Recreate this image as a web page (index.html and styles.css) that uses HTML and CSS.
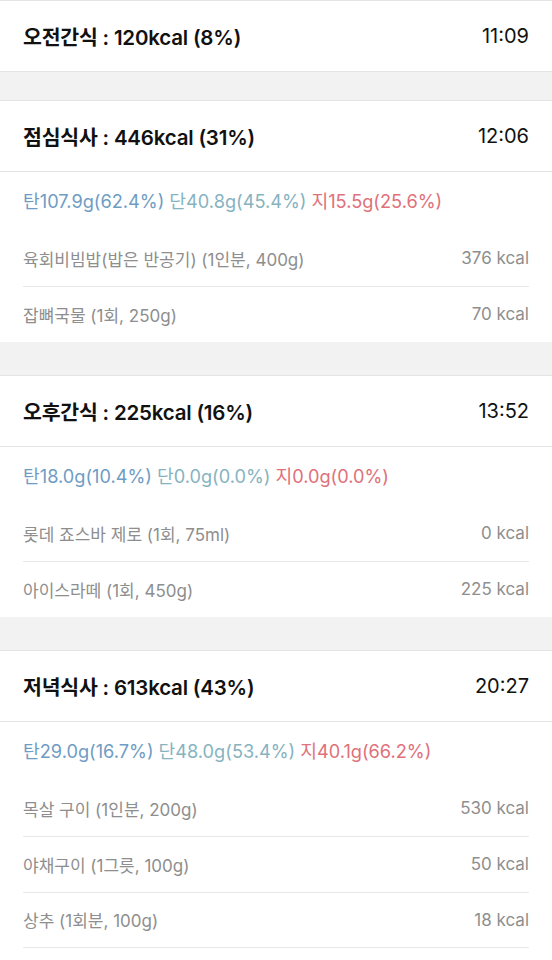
FILE: index.html
```html
<!DOCTYPE html>
<html lang="ko">
<head>
<meta charset="utf-8">
<link rel="stylesheet" href="styles.css">
</head>
<body>
<div class="page">
  <section class="meal meal-first">
    <div class="meal-head"><span class="title">오전간식 : 120kcal (8%)</span><span class="time">11:09</span></div>
  </section>

  <section class="meal">
    <div class="meal-head"><span class="title">점심식사 : 446kcal (31%)</span><span class="time">12:06</span></div>
    <div class="macros"><span class="carb">탄107.9g(62.4%)</span> <span class="prot">단40.8g(45.4%)</span> <span class="fat">지15.5g(25.6%)</span></div>
    <div class="item"><span>육회비빔밥(밥은 반공기) (1인분, 400g)</span><span>376 kcal</span></div>
    <div class="item"><span>잡뼈국물 (1회, 250g)</span><span>70 kcal</span></div>
  </section>

  <section class="meal">
    <div class="meal-head"><span class="title">오후간식 : 225kcal (16%)</span><span class="time">13:52</span></div>
    <div class="macros"><span class="carb">탄18.0g(10.4%)</span> <span class="prot">단0.0g(0.0%)</span> <span class="fat">지0.0g(0.0%)</span></div>
    <div class="item"><span>롯데 죠스바 제로 (1회, 75ml)</span><span>0 kcal</span></div>
    <div class="item"><span>아이스라떼 (1회, 450g)</span><span>225 kcal</span></div>
  </section>

  <section class="meal">
    <div class="meal-head"><span class="title">저녁식사 : 613kcal (43%)</span><span class="time">20:27</span></div>
    <div class="macros"><span class="carb">탄29.0g(16.7%)</span> <span class="prot">단48.0g(53.4%)</span> <span class="fat">지40.1g(66.2%)</span></div>
    <div class="item"><span>목살 구이 (1인분, 200g)</span><span>530 kcal</span></div>
    <div class="item"><span>야채구이 (1그릇, 100g)</span><span>50 kcal</span></div>
    <div class="item item-more"><span>상추 (1회분, 100g)</span><span>18 kcal</span></div>
  </section>
</div>
</body>
</html>
```

FILE: styles.css
```css
html, body {
  margin: 0;
  padding: 0;
  background: #f2f2f2;
}

.page {
  font-family: "Inter", "Noto Sans CJK KR", sans-serif;
  color: #111;
  display: flex;
  flex-direction: column;
  gap: 33px;
}

.meal {
  background: #fff;
  border-top: 1px solid #e4e4e4;
}

.meal-first {
  margin-bottom: -5px;
}

.meal:last-child {
  min-height: 400px;
}

.meal-head {
  height: 70px;
  padding: 0 23px 1px;
  box-sizing: border-box;
  height: 71px;
  display: flex;
  align-items: center;
  justify-content: space-between;
  border-bottom: 1px solid #e4e4e4;
}

.title {
  font-size: 20.5px;
  font-weight: 600;
  letter-spacing: -0.2px;
}

.time {
  font-weight: 400;
  font-size: 20px;
  color: #111;
}

.macros {
  height: 59px;
  padding: 0 23px 3px;
  box-sizing: border-box;
  display: flex;
  align-items: center;
  gap: 5px;
  font-size: 18.2px;
  white-space: nowrap;
}

.carb { color: #6f9cc4; }
.prot { color: #86b3bf; }
.fat { color: #e0717a; }

.item {
  height: 55px;
  margin: 0 23px;
  padding-bottom: 1px;
  box-sizing: border-box;
  display: flex;
  align-items: center;
  justify-content: space-between;
  font-size: 17px;
  color: #8e8e8e;
}

.item + .item {
  height: 56px;
  border-top: 1px solid #e8e8e8;
}

.item-more {
  border-bottom: 1px solid #e8e8e8;
}
```
